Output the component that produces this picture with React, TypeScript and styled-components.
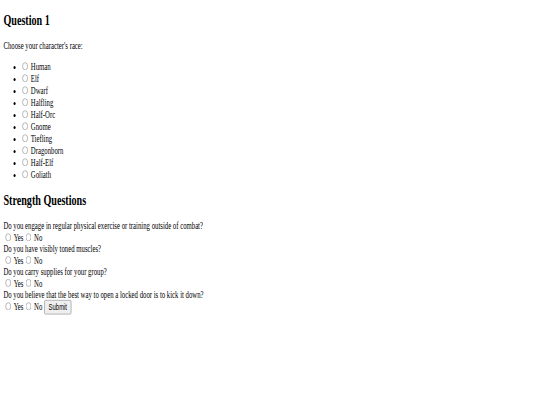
import styled, { createGlobalStyle } from "styled-components";

const GlobalStyle = createGlobalStyle`
  html, body {
    margin: 0;
    padding: 0;
    background: #ffffff;
    overflow: hidden;
  }
`;

// the reference is a plain 1280-wide page squeezed into the window, so the
// page is laid out at full size and scaled down as one piece
const Viewport = styled.div`
  width: 540px;
  height: 405px;
  overflow: hidden;
`;

const Page = styled.div`
  display: flow-root;
  width: 1280px;
  padding: 0 8px 8px;
  box-sizing: border-box;
  transform: scale(0.421875, 0.6);
  transform-origin: 0 0;
  font-family: "Liberation Serif", "Times New Roman", serif;
  font-size: 16px;
  color: #000;
`;

const Heading = styled.h2`
  font-size: 24px;
  font-weight: bold;
  margin: 19.92px 0;
`;

const Prompt = styled.p`
  margin: 16px 0;
`;

const RaceList = styled.ul`
  margin: 16px 0;
  padding-left: 40px;
  list-style: disc;
`;

const Radio = styled.input.attrs({ type: "radio" })`
  margin: 3px 3px 0 5px;
`;

const SubmitButton = styled.button`
  font-family: "Liberation Sans", Arial, sans-serif;
  font-size: 14px;
  padding: 3px 9px;
  margin-left: 5px;
  color: #000;
  background: #efefef;
  border: 1px solid #767676;
  border-radius: 3px;
`;

const races = [
  "Human",
  "Elf",
  "Dwarf",
  "Halfling",
  "Half-Orc",
  "Gnome",
  "Tiefling",
  "Dragonborn",
  "Half-Elf",
  "Goliath",
];

const questions = [
  "Do you engage in regular physical exercise or training outside of combat?",
  "Do you have visibly toned muscles?",
  "Do you carry supplies for your group?",
  "Do you believe that the best way to open a locked door is to kick it down?",
];

export default function App() {
  return (
    <>
      <GlobalStyle />
      <Viewport>
        <Page>
          <Heading>Question 1</Heading>
          <Prompt>Choose your character's race:</Prompt>
          <RaceList>
            {races.map((race) => (
              <li key={race}>
                <Radio name="race" value={race} /> {race}
              </li>
            ))}
          </RaceList>
          <Heading>Strength Questions</Heading>
          <form onSubmit={(e) => e.preventDefault()}>
            {questions.map((q, i) => (
              <div key={q}>
                <label>{q}</label>
                <br />
                <Radio name={`q${i}`} value="yes" /> Yes
                <Radio name={`q${i}`} value="no" /> No
                {i === questions.length - 1 && (
                  <SubmitButton type="submit">Submit</SubmitButton>
                )}
              </div>
            ))}
          </form>
        </Page>
      </Viewport>
    </>
  );
}
